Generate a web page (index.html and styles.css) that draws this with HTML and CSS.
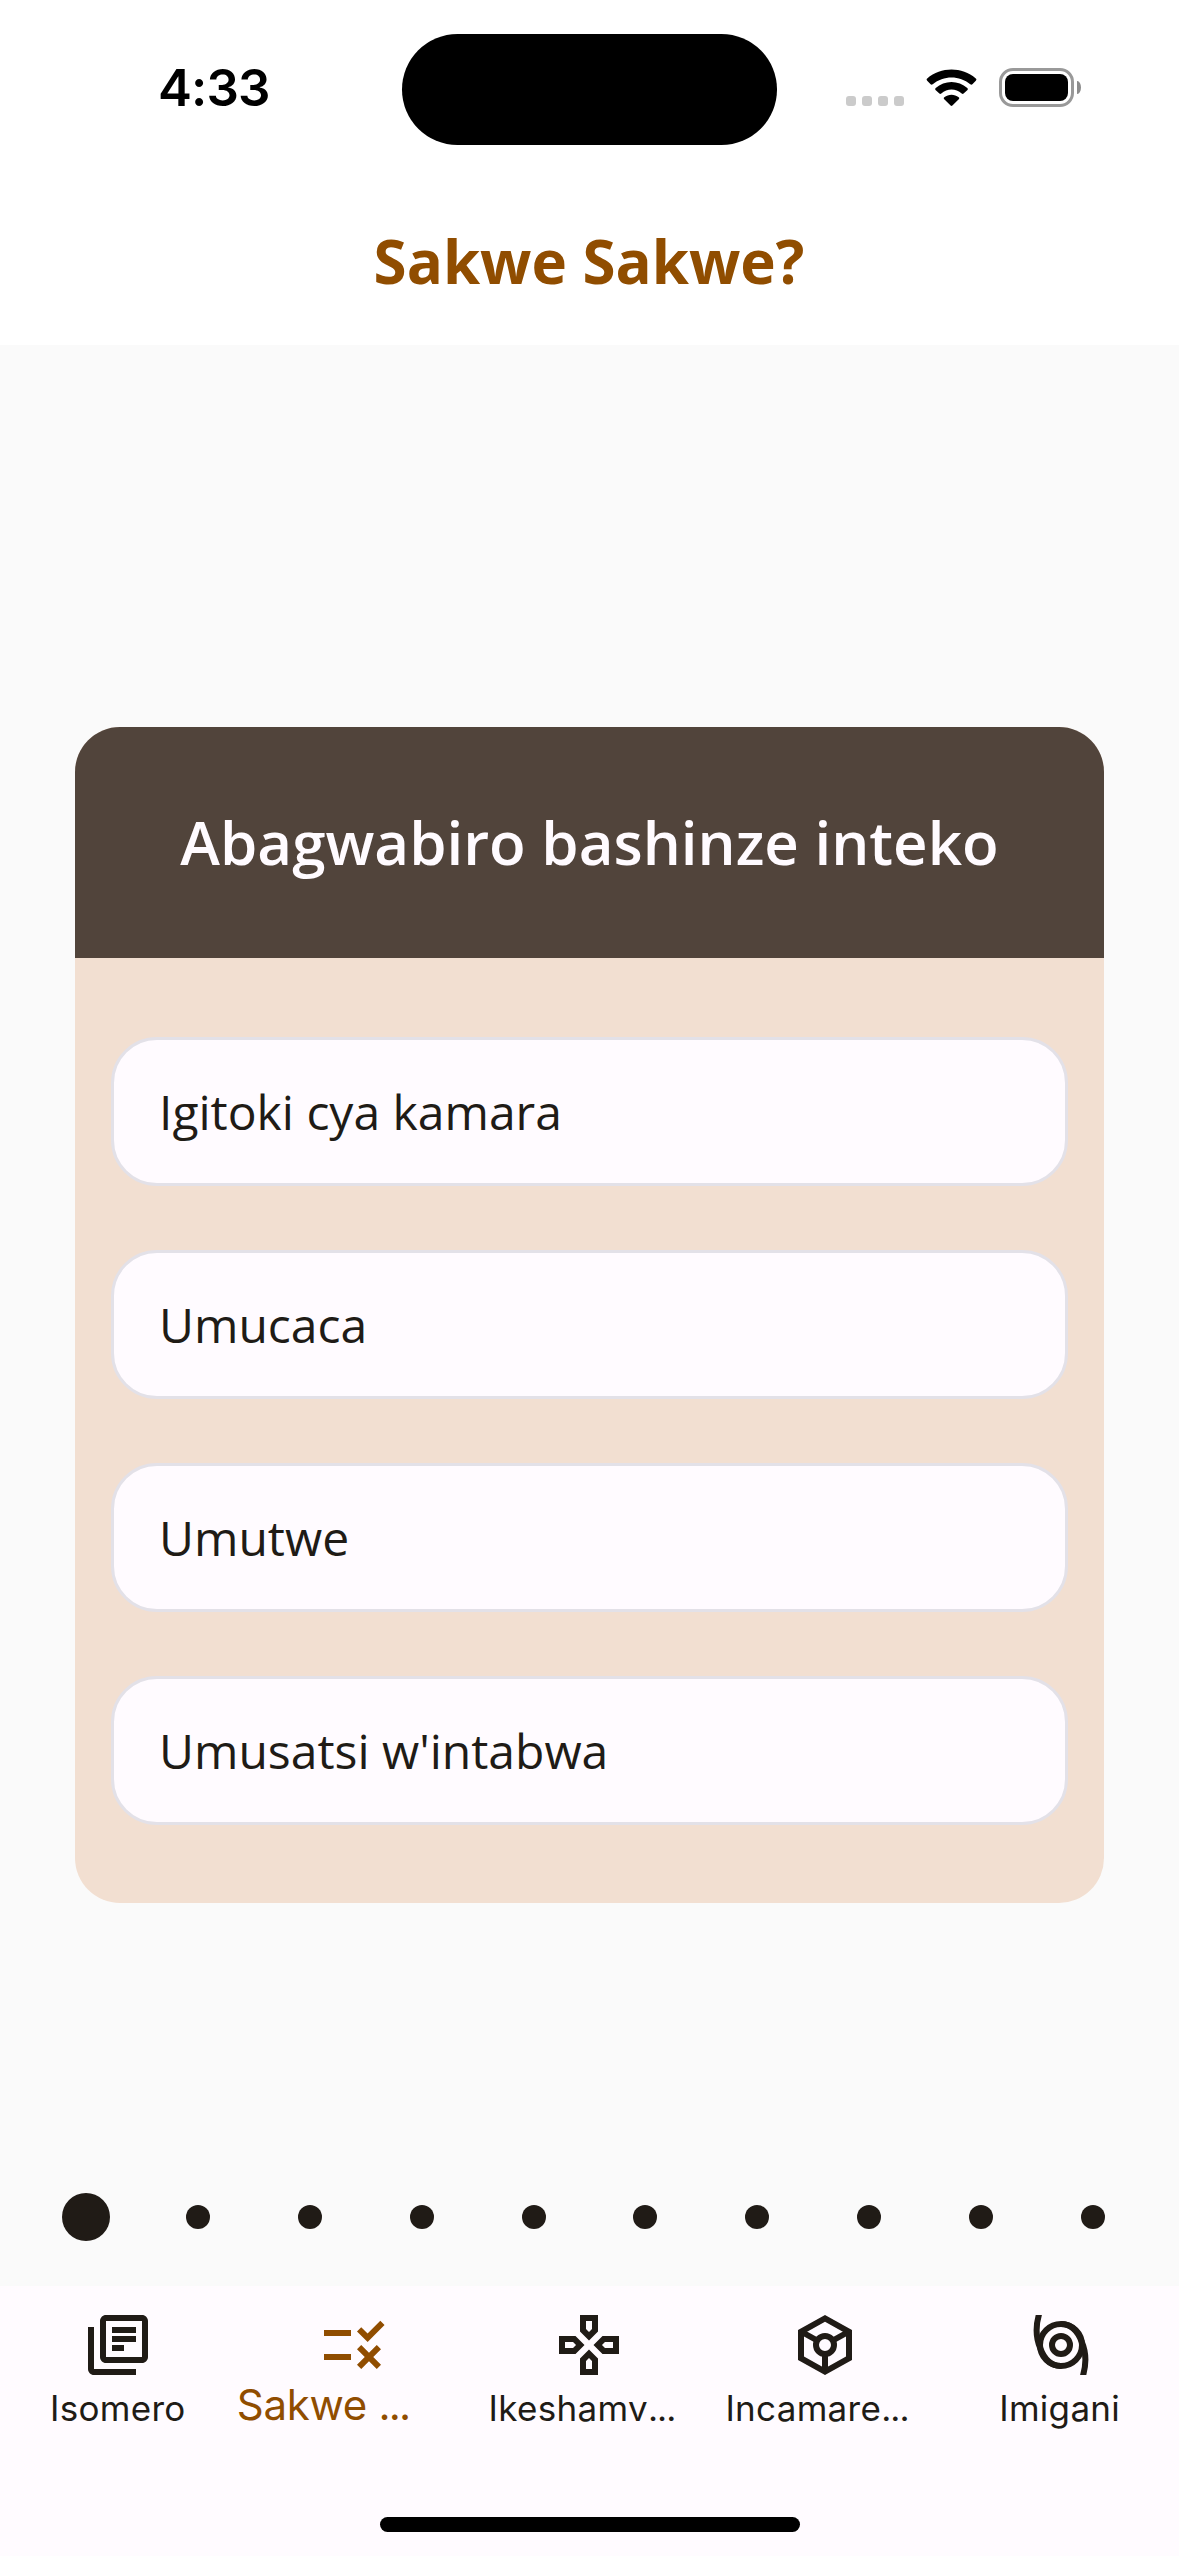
FILE: index.html
```html
<!DOCTYPE html>
<html lang="rw">
<head>
<meta charset="utf-8">
<title>Sakwe Sakwe?</title>
<link rel="stylesheet" href="styles.css">
</head>
<body>
<div class="screen">
  <header class="top">
    <div class="status">
      <div class="time">4:33</div>
      <div class="island"></div>
      <div class="indicators">
        <div class="signal"><i></i><i></i><i></i><i></i></div>
        <svg class="wifi" viewBox="0 0 51 38">
          <path d="M1.2 11.7Q0 10.5 1.2 9.4C15-2.5 36-2.5 49.8 9.4Q51 10.5 49.8 11.7L46.4 15.3Q45.4 16.2 44.3 15.3C33.5 6.2 17.5 6.2 6.7 15.3Q5.6 16.2 4.6 15.3Z"/>
          <path d="M9.5 21Q8.6 20 9.7 19C18.5 11 32.5 11 41.3 19Q42.4 20 41.5 21L37.6 24.6Q36.7 25.4 35.7 24.5C29.8 19.2 21.2 19.2 15.3 24.5Q14.3 25.4 13.4 24.6Z"/>
          <path d="M18 30Q17.2 29 18.3 28.2C22.5 24.8 28.5 24.8 32.7 28.2Q33.8 29 33 30L26.4 36.6Q25.5 37.5 24.6 36.6Z"/>
        </svg>
        <div class="battery"><div class="level"></div></div>
        <div class="nub"></div>
      </div>
    </div>
    <h1 class="title">Sakwe Sakwe?</h1>
  </header>

  <main class="content">
    <section class="card">
      <h2 class="question">Abagwabiro bashinze inteko</h2>
      <div class="options">
        <div class="option">Igitoki cya kamara</div>
        <div class="option">Umucaca</div>
        <div class="option">Umutwe</div>
        <div class="option">Umusatsi w'intabwa</div>
      </div>
    </section>
    <div class="pager">
      <span class="current"></span><span></span><span></span><span></span><span></span>
      <span></span><span></span><span></span><span></span><span></span>
    </div>
  </main>

  <footer class="bottom">
    <nav class="nav">
      <div class="item">
        <svg class="icon" viewBox="0 0 24 24"><path d="M4 6H2v14c0 1.1.9 2 2 2h14v-2H4V6zm16-4H8c-1.1 0-2 .9-2 2v12c0 1.1.9 2 2 2h12c1.1 0 2-.9 2-2V4c0-1.1-.9-2-2-2zm0 14H8V4h12v12zM10 9h8v2h-8zm0 3h4v2h-4zm0-6h8v2h-8z"/></svg>
        <span class="label isomero">Isomero</span>
      </div>
      <div class="item active">
        <svg class="icon" viewBox="0 0 24 24"><path d="M16.54 11L13 7.46l1.41-1.41 2.12 2.12 4.24-4.24 1.41 1.41L16.54 11zM11 7H2v2h9V7zm10 6.41L19.59 12 17 14.59 14.41 12 13 13.41 15.59 16 13 18.59 14.41 20 17 17.41 19.59 20 21 18.59 18.41 16 21 13.41zM11 15H2v2h9v-2z"/></svg>
        <span class="label sakwe">Sakwe <span class="dots">...</span></span>
      </div>
      <div class="item">
        <svg class="icon" viewBox="0 0 24 24"><path d="M13 4v2.67l-1 1-1-1V4h2m7 7v2h-2.67l-1-1 1-1H20M6.67 11l1 1-1 1H4v-2h2.67M12 16.33l1 1V20h-2v-2.67l1-1M15 2H9v5.5l3 3 3-3V2zm7 7h-5.5l-3 3 3 3H22V9zM7.5 9H2v6h5.5l3-3-3-3zm4.5 4.5l-3 3V22h6v-5.5l-3-3z"/></svg>
        <span class="label ikeshamvugo">Ikeshamv<span class="dots">...</span></span>
      </div>
      <div class="item">
        <svg class="icon" viewBox="0 0 24 24">
          <path fill-rule="evenodd" d="M12 2l9 5v10l-9 5-9-5V7zM12 4.29L5 8.18v7.64l7 3.89 7-3.89V8.18z"/>
          <path class="line" d="M12 15v5.5M9.4 10.5L4 7.5M14.6 10.5l5.4-3"/>
          <circle class="line" cx="12" cy="12" r="3"/>
        </svg>
        <span class="label incamarenga">Incamare<span class="dots">...</span></span>
      </div>
      <div class="item">
        <svg class="icon" viewBox="0 0 24 24">
          <clipPath id="trim"><path d="M0 2h24v20H0z"/></clipPath>
          <g class="line" clip-path="url(#trim)">
            <circle cx="12" cy="12" r="7"/>
            <circle cx="12" cy="12" r="3"/>
            <path d="M4.9 1C3.5 5.3 3.5 9.4 5.1 13.1C6.5 16.8 8.8 19 12 19"/>
            <path d="M19.1 23C20.5 18.700 20.5 14.6 18.9 10.9C17.5 7.200 15.200 5 12 5"/>
          </g>
        </svg>
        <span class="label imigani">Imigani</span>
      </div>
    </nav>
    <div class="home"></div>
  </footer>
</div>
</body>
</html>
```
FILE: styles.css
```css
* { box-sizing: border-box; }

body {
  margin: 0;
  background: #fafafa;
  color: #201b16;
  font-family: "Open Sans", sans-serif;
}

.screen {
  width: 1179px;
  height: 2556px;
  display: flex;
  flex-direction: column;
  overflow: hidden;
}

/* Status bar and title */
.top { height: 345px; background: #fff; }

.status {
  height: 177px;
  display: grid;
  grid-template-columns: 402px 375px 402px;
  align-items: start;
}

.time {
  padding: 58px 0 0 158px;
  color: #000;
  font: 600 51px/60px Inter, sans-serif;
  letter-spacing: -0.9px;
}

.island {
  height: 111px;
  margin-top: 33.5px;
  border-radius: 56px;
  background: #000;
}

.indicators {
  display: flex;
  align-items: center;
  height: 39px;
  margin: 68px 0 0 69px;
}

.signal { display: flex; gap: 6px; padding-top: 27px; }
.signal i { width: 10px; height: 10px; border-radius: 3px; background: #cbcbcb; }
.wifi { width: 51px; height: 38px; margin-left: 22px; }

.battery {
  width: 75px;
  height: 39px;
  margin-left: 22px;
  padding: 3px;
  border: 3px solid #999;
  border-radius: 14px;
}

.level { height: 27px; border-radius: 8px; background: #000; }

.nub {
  width: 4px;
  height: 13px;
  margin-left: 3px;
  border-radius: 0 4px 4px 0 / 0 7px 7px 0;
  background: #8c8c8c;
}

.title {
  margin: 0;
  padding-right: 1px;
  color: #904d00;
  font-size: 60px;
  font-weight: 700;
  line-height: 168px;
  text-align: center;
}

/* Quiz card */
.content {
  height: 1941px;
  padding: 382.4px 62px 0;
}

.card {
  height: 1176px;
  margin: 0 13px;
  border-radius: 45px;
  background: #f2dfd1;
  overflow: hidden;
}

.question {
  height: 231px;
  margin: 0;
  background: #51443b;
  color: #fffbff;
  font-size: 60px;
  font-weight: 600;
  line-height: 231px;
  text-align: center;
  white-space: nowrap;
}

.options {
  display: flex;
  flex-direction: column;
  gap: 64px;
  padding: 78.6px 36px;
}

.option {
  height: 149px;
  padding: 0 45px;
  border: 3px solid #e3e1e8;
  border-radius: 46px;
  background: #fffbff;
  font-size: 48px;
  line-height: 143px;
}

.pager {
  display: flex;
  align-items: center;
  justify-content: space-between;
  height: 48px;
  margin-top: 289.6px;
}

.pager span {
  width: 24px;
  height: 24px;
  margin: 0 12px;
  border-radius: 50%;
  background: #201b16;
}

.pager .current { width: 48px; height: 48px; margin: 0; }

/* Bottom navigation */
.bottom {
  flex: 1;
  background: #fffbff;
}

.nav {
  display: grid;
  grid-template-columns: repeat(5, 1fr);
  height: 231px;
  padding-top: 23px;
}

.item { min-width: 0; }
.icon { display: block; width: 72px; height: 72px; margin: 0 auto; fill: currentColor; }
.line { fill: none; stroke: currentColor; stroke-width: 2; }

.label {
  display: block;
  height: 54px;
  font: 400 35px/54px Inter, sans-serif;
  letter-spacing: 0.3px;
  white-space: nowrap;
}

.dots { letter-spacing: -0.9px; }

.active { color: #904d00; }
.active .label { font-size: 42px; line-height: 48px; letter-spacing: -0.3px; }
.active .dots { letter-spacing: -1.8px; }
.isomero { padding-left: 50px; }
.sakwe { padding-left: 1px; }
.ikeshamvugo { padding-left: 17px; }
.incamarenga { padding-left: 18px; }
.imigani { padding-left: 56px; }

.home {
  width: 420px;
  height: 15px;
  margin: 0 auto;
  border-radius: 8px;
  background: #000;
}
```
